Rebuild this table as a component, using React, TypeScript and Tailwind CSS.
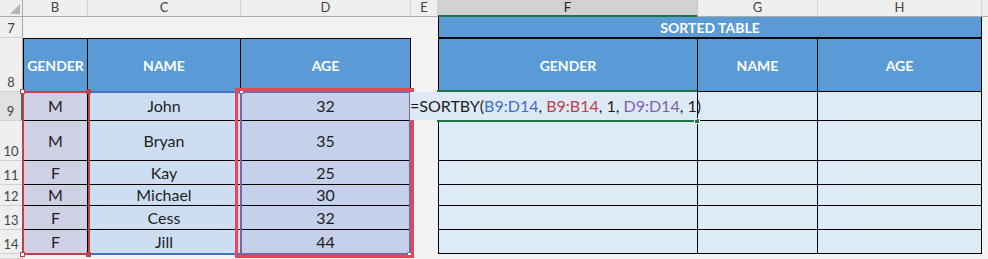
import React from "react";

type Person = { gender: string; name: string; age: number };

const people: Person[] = [
	{ gender: "M", name: "John", age: 32 },
	{ gender: "M", name: "Bryan", age: 35 },
	{ gender: "F", name: "Kay", age: 25 },
	{ gender: "M", name: "Michael", age: 30 },
	{ gender: "F", name: "Cess", age: 32 },
	{ gender: "F", name: "Jill", age: 44 },
];

const rowNumbers = [9, 10, 11, 12, 13, 14];

function ColHeader({ label, active }: { label: string; active?: boolean }) {
	if (active) {
		return (
			<div className="flex items-center justify-center border-r border-b-2 border-r-[#c6c6c6] border-b-[#217346] bg-[#d2d2d2] text-[13px] text-[#222]">
				{label}
			</div>
		);
	}

	return (
		<div className="flex items-center justify-center border-r border-b border-r-[#d4d4d4] border-b-[#ababab] bg-[#efefef] text-[13px] text-[#444]">
			{label}
		</div>
	);
}

function RowHeader({ label, active }: { label?: number; active?: boolean }) {
	return (
		<div
			className={
				active
					? "flex items-end justify-center border-r-2 border-b border-r-[#217346] border-b-[#d0d0d0] bg-[#e1e1e1] text-[13px] leading-[18px] text-[#444]"
					: "flex items-end justify-center border-r border-b border-r-[#ababab] border-b-[#d0d0d0] bg-[#efefef] text-[13px] leading-[18px] text-[#444]"
			}
		>
			{label}
		</div>
	);
}

function Blank() {
	return <div className="bg-[#f2f2f2]" />;
}

function HeadCell({ label, first }: { label: string; first?: boolean }) {
	return (
		<div
			className={`flex items-center justify-center border-t border-r border-b border-black bg-[#5b9bd5] text-[14px] font-bold text-white ${first ? "border-l" : ""}`}
		>
			{label}
		</div>
	);
}

function BodyCell({ value, bg, first }: { value?: string | number; bg: string; first?: boolean }) {
	return (
		<div
			className={`flex items-center justify-center border-r border-b border-black text-[16px] text-[#1e1e1e] ${bg} ${first ? "border-l" : ""}`}
		>
			{value}
		</div>
	);
}

function Handle({ className }: { className: string }) {
	return <div className={`absolute h-[5px] w-[5px] ${className}`} />;
}

export default function App() {
	return (
		<div className="relative h-[259px] w-[988px] overflow-hidden bg-[#f2f2f2] font-['Lato','Liberation_Sans',sans-serif]">
			<div className="grid h-full grid-cols-[23px_65px_153px_170px_27px_260px_120px_164px_6px] grid-rows-[17px_21px_54px_29px_40px_24px_21px_24px_24px_5px]">
				{/* column letters */}
				<div className="relative border-r border-b border-r-[#ababab] border-b-[#ababab] bg-[#efefef]">
					<svg className="absolute right-[2px] bottom-[2px]" width="10" height="10" viewBox="0 0 10 10">
						<polygon points="10,0 10,10 0,10" fill="#b5b5b5" />
					</svg>
				</div>
				<ColHeader label="B" />
				<ColHeader label="C" />
				<ColHeader label="D" />
				<ColHeader label="E" />
				<ColHeader label="F" active />
				<ColHeader label="G" />
				<ColHeader label="H" />
				<div className="border-b border-b-[#ababab] bg-[#efefef]" />

				{/* row 7 */}
				<RowHeader label={7} />
				<Blank />
				<Blank />
				<Blank />
				<Blank />
				<div className="col-span-3 flex items-center justify-center border-r border-b border-l border-black bg-[#5b9bd5] text-[14px] font-bold text-white">
					SORTED TABLE
				</div>
				<Blank />

				{/* row 8 */}
				<RowHeader label={8} />
				<HeadCell label="GENDER" first />
				<HeadCell label="NAME" />
				<HeadCell label="AGE" />
				<Blank />
				<HeadCell label="GENDER" first />
				<HeadCell label="NAME" />
				<HeadCell label="AGE" />
				<Blank />

				{/* rows 9-14 */}
				{people.map((person, index) => (
					<React.Fragment key={person.name}>
						<RowHeader label={rowNumbers[index]} active={index === 0} />
						<BodyCell value={person.gender} bg="bg-[#cfd0e3]" first />
						<BodyCell value={person.name} bg="bg-[#cddef2]" />
						<BodyCell value={person.age} bg="bg-[#c5d0ea]" />
						<Blank />
						<BodyCell bg="bg-[#ddebf7]" first />
						<BodyCell bg="bg-[#ddebf7]" />
						<BodyCell bg="bg-[#ddebf7]" />
						<Blank />
					</React.Fragment>
				))}

				<RowHeader />
				<Blank />
				<Blank />
				<Blank />
				<Blank />
				<Blank />
				<Blank />
				<Blank />
				<Blank />
			</div>

			{/* range highlights of the formula being edited */}
			<div className="absolute top-[91px] left-[88px] h-[2px] w-[153px] bg-[#4472c4]" />
			<div className="absolute top-[253px] left-[88px] h-[2px] w-[153px] bg-[#4472c4]" />

			<div className="absolute top-[91px] left-[22px] h-[164px] w-[68px] border-2 border-[#c0404c]" />
			<Handle className="top-[89px] left-[20px] border border-[#c0404c] bg-white" />
			<Handle className="top-[89px] left-[86px] bg-[#c0404c]" />
			<Handle className="top-[252px] left-[20px] border border-[#c0404c] bg-white" />
			<Handle className="top-[252px] left-[86px] bg-[#c0404c]" />

			<div className="absolute top-[91px] left-[240px] h-[164px] w-[171px] border-2 border-[#8064a2]" />
			<Handle className="top-[89px] left-[239px] border border-[#8064a2] bg-white" />
			<Handle className="top-[252px] left-[407px] border border-[#8064a2] bg-white" />

			{/* annotation box */}
			<div className="absolute top-[88px] left-[235px] h-[170px] w-[179px] border-[3px] border-[#e04a50]" />

			{/* active cell F9 */}
			<div className="absolute top-[90px] left-[437px] h-[2px] w-[260px] bg-[#217346]" />
			<div className="absolute top-[120px] left-[437px] h-[2px] w-[257px] bg-[#217346]" />
			<div className="absolute top-[118px] left-[694px] h-[6px] w-[6px] border border-white bg-[#217346]" />

			{/* formula in edit mode */}
			<div className="absolute top-[92px] left-[410px] flex h-[28px] w-[287px] items-center whitespace-nowrap bg-[#dde9f5] text-[16px] text-[#1e1e1e]">
				<span>=SORTBY(</span>
				<span className="text-[#3f6fc0]">B9:D14</span>
				<span>,&nbsp;</span>
				<span className="text-[#c0404c]">B9:B14</span>
				<span>, 1,&nbsp;</span>
				<span className="text-[#7e5fae]">D9:D14</span>
				<span>, 1)</span>
			</div>
		</div>
	);
}
